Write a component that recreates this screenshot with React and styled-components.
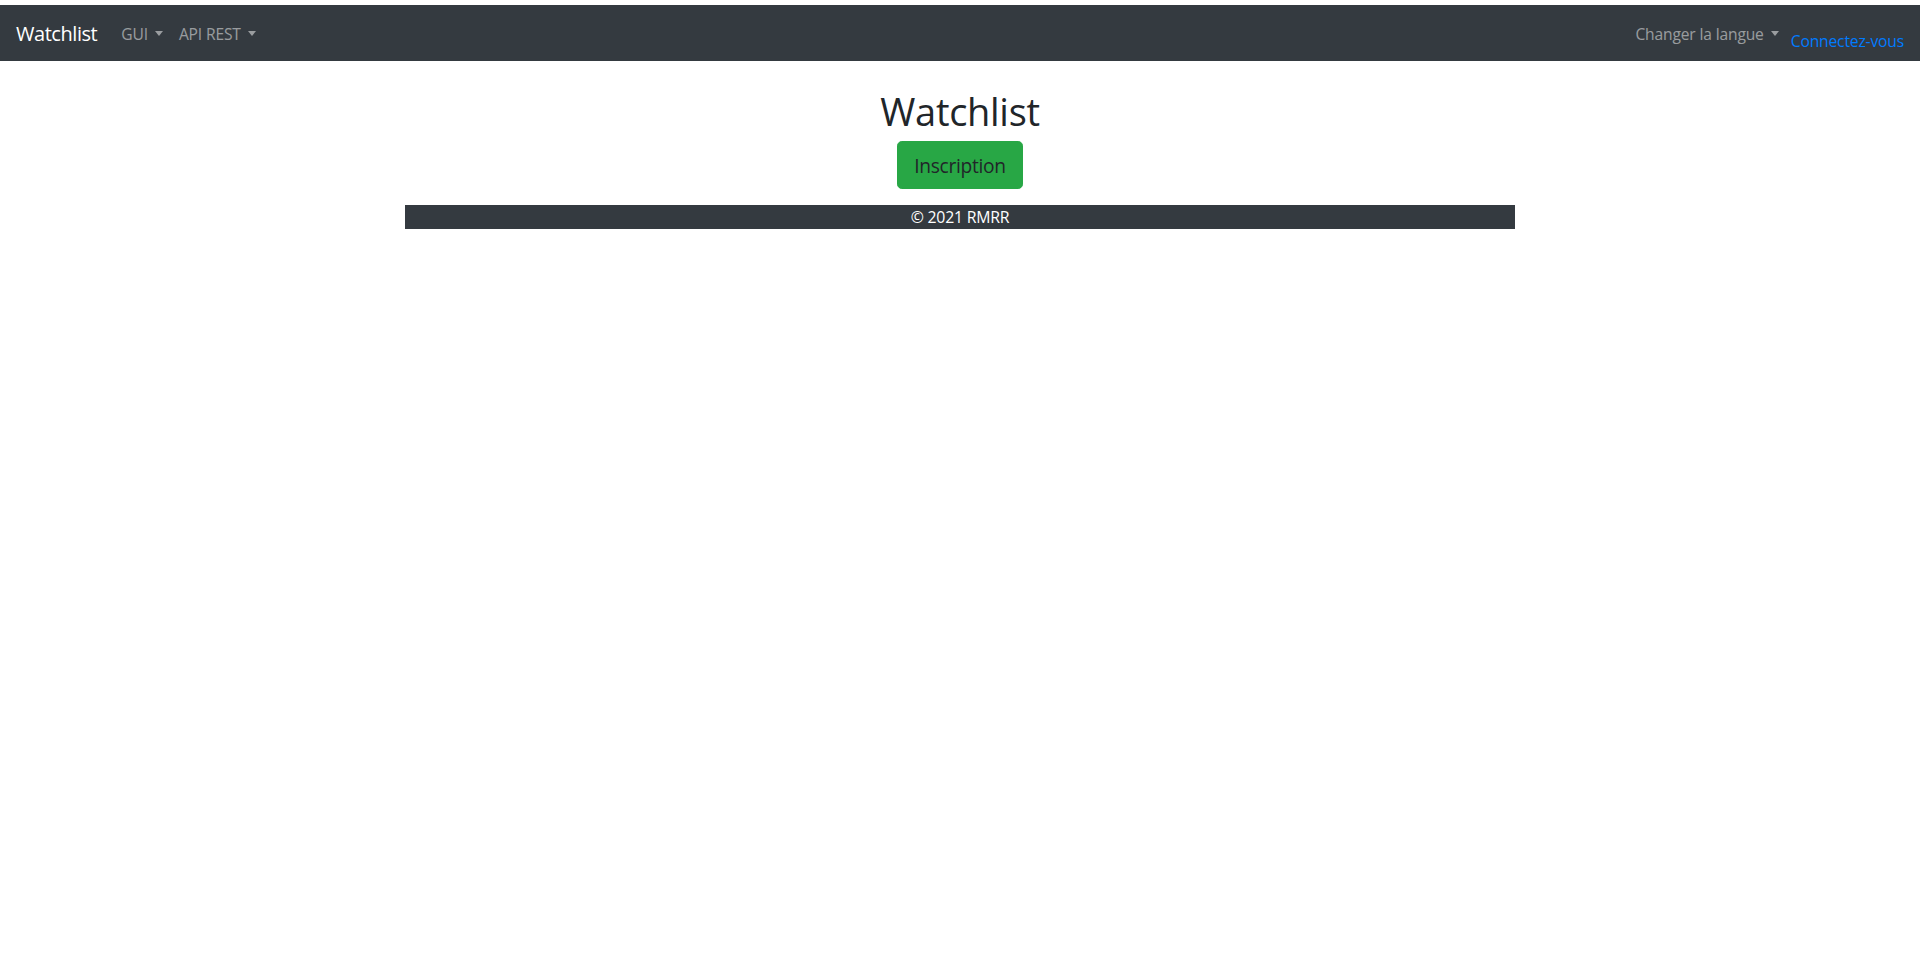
import React from 'react';
import styled, { createGlobalStyle } from 'styled-components';

const GlobalStyle = createGlobalStyle`
    body {
        margin: 0;
        background-color: #fff;
        font-family: "Open Sans", "Noto Sans", Arial, sans-serif;
        font-size: 16px;
        line-height: 1.5;
        color: #212529;
    }
    #root {
        padding-top: 5px;
    }
`;

const NavBar = styled.nav`
    height: 56px;
    box-sizing: border-box;
    display: flex;
    align-items: center;
    justify-content: space-between;
    padding: 10px 16px 6px;
    background-color: #343a40;
`;

const NavGroup = styled.div`
    display: flex;
    align-items: center;
`;

const Brand = styled.a`
    font-size: 20px;
    color: #fff;
    margin-right: 16px;
    margin-top: -1px;
    line-height: 1.5;
    text-decoration: none;
    letter-spacing: -0.45px;
`;

const NavLink = styled.a`
    display: inline-flex;
    align-items: center;
    padding: 8px;
    font-size: 15.6px;
    color: rgba(255, 255, 255, 0.5);
    text-decoration: none;
    cursor: pointer;
    letter-spacing: -0.15px;

    &::after {
        content: "";
        display: inline-block;
        margin-left: 7px;
        margin-top: -3px;
        border-top: 5px solid;
        border-right: 4px solid transparent;
        border-left: 4px solid transparent;
    }
`;

const LoginLink = styled.a`
    color: #007bff;
    font-size: 15.7px;
    text-decoration: none;
    margin-left: 4px;
    margin-top: 14px;
    letter-spacing: -0.2px;
`;

const Container = styled.main`
    width: 1110px;
    margin: 0 auto;
    display: flex;
    flex-direction: column;
    align-items: center;
    padding-top: 26px;
`;

const Title = styled.h1`
    margin: 0 0 6px;
    font-size: 38px;
    font-weight: 400;
    line-height: 48px;
    letter-spacing: -0.3px;
`;

const SignUpButton = styled.button`
    height: 48px;
    padding: 9px 16px 7px;
    font-family: inherit;
    font-size: 19.2px;
    line-height: 30px;
    color: #212529;
    background-color: #28a745;
    border: 1px solid #28a745;
    border-radius: 4.8px;
    cursor: pointer;
    letter-spacing: -0.3px;
`;

const Footer = styled.footer`
    align-self: stretch;
    margin-top: 16px;
    height: 24px;
    background-color: #343a40;
    color: #fff;
    font-size: 15.8px;
    line-height: 25px;
    text-align: center;
    letter-spacing: -0.2px;
`;

const App = () => {
    return (
        <>
            <GlobalStyle />
            <NavBar>
                <NavGroup>
                    <Brand href="#">Watchlist</Brand>
                    <NavLink>GUI</NavLink>
                    <NavLink>API REST</NavLink>
                </NavGroup>
                <NavGroup>
                    <NavLink>Changer la langue</NavLink>
                    <LoginLink href="#">Connectez-vous</LoginLink>
                </NavGroup>
            </NavBar>
            <Container>
                <Title>Watchlist</Title>
                <SignUpButton>Inscription</SignUpButton>
                <Footer>© 2021 RMRR</Footer>
            </Container>
        </>
    );
};

export default App;
